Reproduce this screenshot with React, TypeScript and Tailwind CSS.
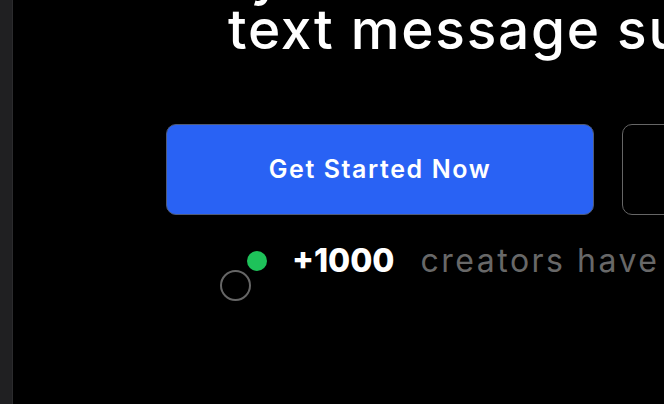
import React from "react";

export default function App() {
  return (
    <div
      className="flex h-[404px] w-[664px] overflow-hidden bg-black"
      style={{ fontFamily: "Inter, 'Noto Sans', sans-serif" }}
    >
      {/* Left rail */}
      <div className="w-[13px] shrink-0 border-r border-[#2b2b2d] bg-[#202022]" />

      {/* Hero */}
      <div className="flex min-w-0 flex-1 flex-col">
        <h1 className="-mt-[52px] ml-[215px] whitespace-nowrap text-[55px] font-medium leading-[54px] tracking-[1.7px] text-white">
          <span className="-ml-[140px] block">Grow your audience with</span>
          <span className="block">text message subscribers</span>
        </h1>

        <div className="mt-[68px] ml-[153px] flex gap-[28px]">
          <button className="flex h-[91px] w-[428px] shrink-0 items-center justify-center rounded-[10px] border border-[#4f5b78] bg-[#2962f4] text-[25px] font-semibold tracking-[1.6px] text-white">
            Get Started Now
          </button>
          <button className="h-[91px] w-[300px] shrink-0 rounded-[10px] border border-[#666666] bg-black text-[25px] font-semibold text-white">
            Learn More
          </button>
        </div>

        <div className="mt-[26px] ml-[207px] flex items-start whitespace-nowrap">
          <div className="relative mt-[10px] h-[50px] w-[47px] shrink-0">
            <div className="absolute left-0 top-[19px] h-[31px] w-[31px] rounded-full border-[2.5px] border-[#666666]" />
            <div className="absolute left-[27px] top-0 h-5 w-5 rounded-full bg-[#1ec25a]" />
          </div>
          <span className="ml-[25px] text-[32px] font-extrabold leading-[40px] text-white">
            +1000
          </span>
          <span className="ml-[26px] text-[32px] font-normal leading-[40px] tracking-[2.5px] text-[#686868]">
            creators have joined
          </span>
        </div>
      </div>
    </div>
  );
}
